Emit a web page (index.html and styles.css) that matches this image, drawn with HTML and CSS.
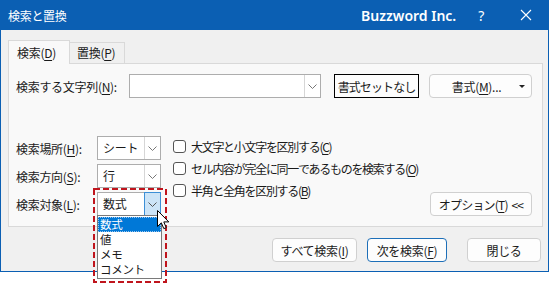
FILE: index.html
```html
<!DOCTYPE html>
<html lang="ja">
<head>
    <meta charset="UTF-8">
    <meta name="viewport" content="width=device-width, initial-scale=1.0">
    <title>検索と置換</title>
    <link rel="stylesheet" href="styles.css">
</head>
<body>
    <div class="window">
        <div class="titlebar">
            <span class="title">検索と置換</span>
            <span class="brand">Buzzword Inc.</span>
            <span class="help">?</span>
            <svg class="close" width="12" height="12" viewBox="0 0 12 12">
                <path d="M1 1 L11 11 M11 1 L1 11" stroke="#fff" stroke-width="1.1" fill="none"/>
            </svg>
        </div>

        <div class="content">
            <div class="tabs">
                <div class="tab active">検索(<u>D</u>)</div>
                <div class="tab">置換(<u>P</u>)</div>
            </div>

            <div class="panel">
                <div class="find-row">
                    <span class="label find-label">検索する文字列(<u>N</u>):</span>
                    <div class="combo find-input">
                        <span class="value"></span>
                        <span class="arrow">
                            <svg width="9" height="5" viewBox="0 0 9 5"><path d="M0.5 0.5 L4.5 4.5 L8.5 0.5" stroke="#777" fill="none"/></svg>
                        </span>
                    </div>
                    <button class="btn btn-focus">書式セットなし</button>
                    <button class="btn btn-format">書式(<u>M</u>)...<span class="caret"></span></button>
                </div>

                <div class="options">
                    <div class="fields">
                        <div class="field">
                            <span class="label">検索場所(<u>H</u>):</span>
                            <div class="combo">
                                <span class="value">シート</span>
                                <span class="arrow">
                                    <svg width="9" height="5" viewBox="0 0 9 5"><path d="M0.5 0.5 L4.5 4.5 L8.5 0.5" stroke="#777" fill="none"/></svg>
                                </span>
                            </div>
                        </div>
                        <div class="field">
                            <span class="label">検索方向(<u>S</u>):</span>
                            <div class="combo">
                                <span class="value">行</span>
                                <span class="arrow">
                                    <svg width="9" height="5" viewBox="0 0 9 5"><path d="M0.5 0.5 L4.5 4.5 L8.5 0.5" stroke="#777" fill="none"/></svg>
                                </span>
                            </div>
                        </div>
                        <div class="field">
                            <span class="label">検索対象(<u>L</u>):</span>
                            <div class="combo open">
                                <span class="value">数式</span>
                                <span class="arrow">
                                    <svg width="9" height="5" viewBox="0 0 9 5"><path d="M0.5 0.5 L4.5 4.5 L8.5 0.5" stroke="#555" fill="none"/></svg>
                                </span>
                            </div>
                        </div>
                    </div>

                    <div class="checks">
                        <label class="check"><span class="box"></span>大文字と小文字を区別する(<u>C</u>)</label>
                        <label class="check"><span class="box"></span>セル内容が完全に同一であるものを検索する(<u>O</u>)</label>
                        <label class="check"><span class="box"></span>半角と全角を区別する(<u>B</u>)</label>
                    </div>

                    <button class="btn btn-options">オプション(<u>T</u>)&nbsp; &lt;&lt;</button>
                </div>
            </div>

            <div class="footer">
                <button class="btn btn-find-all">すべて検索(<u>I</u>)</button>
                <button class="btn btn-default">次を検索(<u>F</u>)</button>
                <button class="btn btn-close">閉じる</button>
            </div>
        </div>

        <ul class="dropdown">
            <li class="selected">数式</li>
            <li>値</li>
            <li>メモ</li>
            <li>コメント</li>
        </ul>

        <svg class="marker" width="74" height="95" viewBox="0 0 74 95">
            <rect x="1" y="1" width="72" height="93" fill="none" stroke="#c0151d" stroke-width="2" stroke-dasharray="6 3"/>
        </svg>

        <svg class="cursor" width="13" height="21" viewBox="0 0 13 21">
            <path d="M0.5 0.5 L0.5 16.5 L4.3 12.8 L6.8 18.6 L9.2 17.6 L6.8 11.9 L11.8 11.9 Z" fill="#fff" stroke="#000" stroke-width="1"/>
        </svg>
    </div>
</body>
</html>
```

FILE: styles.css
```css
html, body {
    height: 100%;
}
body {
    margin: 0;
    min-height: 284px;
    background: #fff;
    font-family: "Noto Sans CJK JP", "Noto Sans", sans-serif;
    font-size: 12px;
    letter-spacing: -0.3px;
    color: #1a1a1a;
}
u {
    text-decoration: underline;
    text-underline-offset: 2px;
}
.window {
    position: relative;
    width: 549px;
    height: 272px;
    box-sizing: border-box;
    background: #f0f0f0;
    border: 1px solid #0b5fb3;
    border-top: none;
}
.titlebar {
    display: flex;
    align-items: center;
    height: 30px;
    margin: 0 -1px;
    padding: 0 17px 0 8px;
    background: #0b5fb3;
    color: #fff;
}
.title {
    font-size: 12px;
}
.brand {
    margin-left: auto;
    font-family: "Noto Sans", sans-serif;
    font-weight: 600;
    font-size: 14px;
    letter-spacing: 0;
}
.help {
    margin-left: 22px;
    font-family: "Noto Sans", sans-serif;
    font-size: 14px;
}
.close {
    margin-left: 36px;
}
.content {
    padding: 10px 0 0 7px;
}
.tabs {
    display: flex;
    align-items: flex-end;
    height: 23px;
}
.tab {
    height: 21px;
    line-height: 20px;
    padding: 0 6px 0 8px;
    box-sizing: border-box;
    border: 1px solid #d9d9d9;
    border-bottom: none;
    background: #f0f0f0;
    white-space: nowrap;
}
.tab.active {
    position: relative;
    z-index: 1;
    height: 24px;
    margin-bottom: -1px;
    width: 62px;
    background: #f9f9f9;
    padding-top: 2px;
}
.tab + .tab {
    margin-left: -1px;
    width: 56px;
    padding: 0 0 0 7px;
}
.panel {
    width: 535px;
    height: 164px;
    box-sizing: border-box;
    padding: 10px 10px 10px 7px;
    background: #f9f9f9;
    border: 1px solid #d9d9d9;
    display: flex;
    flex-direction: column;
}
.find-row {
    display: flex;
    align-items: center;
    height: 24px;
}
.label {
    white-space: nowrap;
}
.find-label {
    width: 113px;
}
.combo {
    display: flex;
    align-items: stretch;
    height: 24px;
    box-sizing: border-box;
    background: #fff;
    border: 1px solid #adadad;
}
.combo .value {
    flex: 1;
    padding-left: 5px;
    line-height: 22px;
}
.combo .arrow {
    width: 15px;
    border-left: 1px solid #d6d6d6;
    display: flex;
    align-items: center;
    justify-content: center;
}
.combo.open .arrow {
    background: #cce4f7;
    border: 1px solid #3c8fd6;
    margin: -1px -1px -1px 0;
}
.find-input {
    width: 192px;
}
.btn {
    height: 24px;
    box-sizing: border-box;
    font: inherit;
    letter-spacing: inherit;
    white-space: nowrap;
    color: #1a1a1a;
    background: #fdfdfd;
    border: 1px solid #d0d0d0;
    border-radius: 4px;
    padding: 0;
    display: flex;
    align-items: center;
    justify-content: center;
}
.btn-focus {
    width: 85px;
    margin-left: 13px;
    border: 1px solid #000;
    border-radius: 0;
    letter-spacing: -0.9px;
}
.btn-format {
    width: 103px;
    margin-left: 10px;
    position: relative;
    padding-right: 8px;
}
.caret {
    position: absolute;
    right: 6px;
    top: 10px;
    border-left: 3px solid transparent;
    border-right: 3px solid transparent;
    border-top: 3px solid #222;
}
.options {
    display: flex;
    align-items: flex-start;
    margin-top: auto;
}
.fields {
    display: flex;
    flex-direction: column;
    gap: 4px;
}
.field {
    display: flex;
    align-items: center;
}
.field .label {
    width: 81px;
}
.field .combo {
    width: 64px;
}
.checks {
    display: flex;
    flex-direction: column;
    margin: -1px 0 0 12px;
}
.check {
    display: flex;
    align-items: center;
    height: 22px;
    white-space: nowrap;
    letter-spacing: -1.3px;
}
.box {
    width: 11px;
    height: 11px;
    border: 1px solid #555;
    border-radius: 3px;
    background: #fff;
    margin-right: 5px;
}
.btn-options {
    align-self: flex-end;
    margin-left: auto;
    width: 102px;
    letter-spacing: -0.8px;
}
.footer {
    display: flex;
    justify-content: flex-end;
    gap: 10px;
    padding: 11px 7px 0 0;
}
.btn-find-all {
    width: 85px;
}
.btn-default {
    width: 80px;
    border-color: #1d6fb8;
}
.btn-close {
    width: 74px;
    margin-left: 10px;
}
.dropdown {
    position: absolute;
    z-index: 2;
    left: 96px;
    top: 215px;
    width: 65px;
    height: 64px;
    margin: 0;
    padding: 1px 0;
    box-sizing: border-box;
    list-style: none;
    background: #fff;
    border: 1px solid #7a7a7a;
    font-size: 11.5px;
}
.dropdown li {
    height: 15px;
    line-height: 15px;
    padding-left: 2px;
    overflow: hidden;
}
.dropdown li.selected {
    background: #0078d7;
    color: #fff;
    outline: 1px dotted #9cc7ee;
    outline-offset: -1px;
}
.marker {
    position: absolute;
    z-index: 3;
    left: 92px;
    top: 188px;
}
.cursor {
    position: absolute;
    z-index: 4;
    left: 156px;
    top: 210px;
}
```
